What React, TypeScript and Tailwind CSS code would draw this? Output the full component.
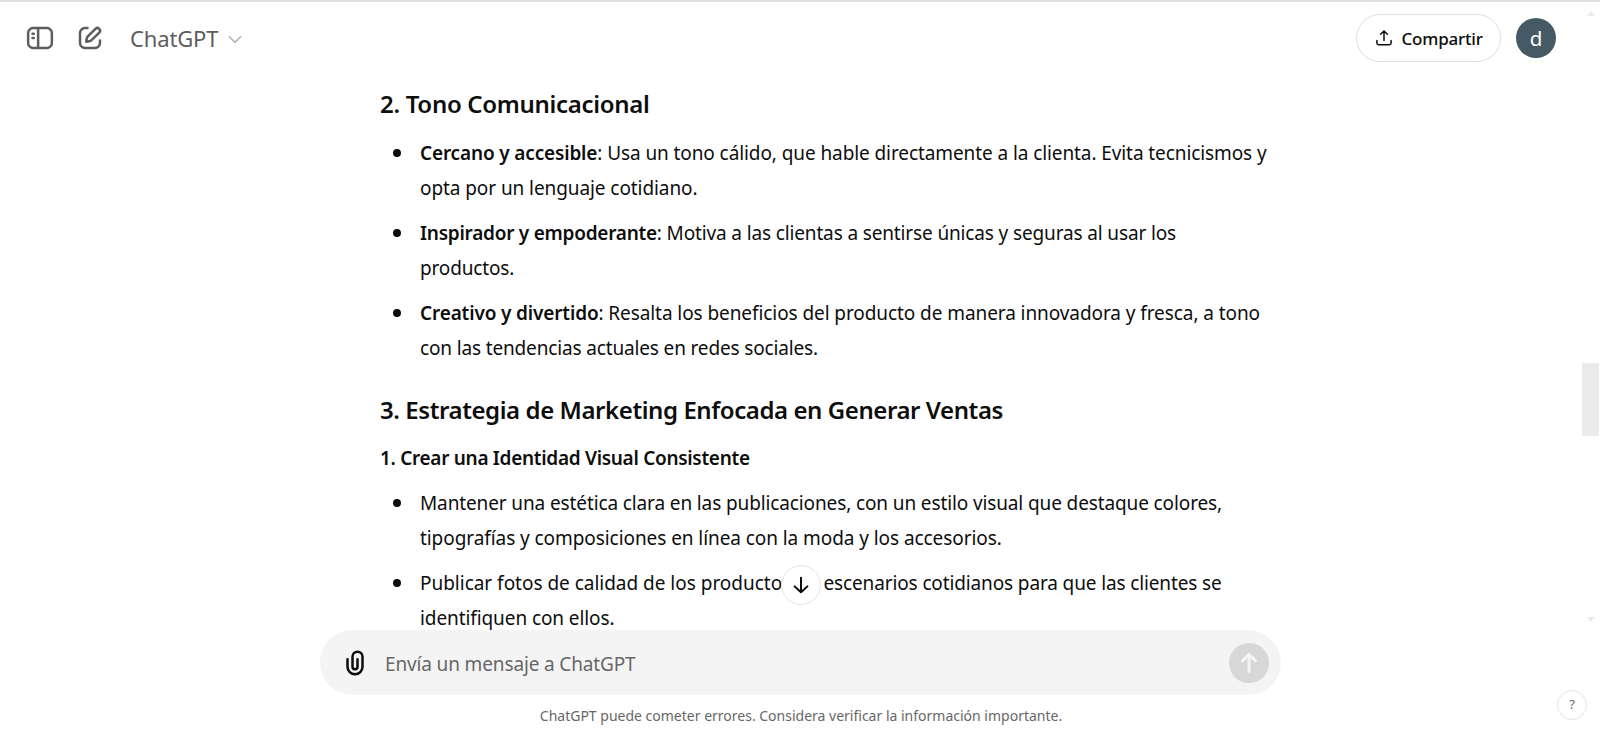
import React from "react";

type Segment = { text: string; style: string };

const toneItems: Segment[][][] = [
  [
    [
      { text: "Cercano y accesible", style: "font-semibold tracking-[-0.16px]" },
      {
        text: ": Usa un tono cálido, que hable directamente a la clienta. Evita tecnicismos y",
        style: "tracking-[-0.09px]",
      },
    ],
    [{ text: "opta por un lenguaje cotidiano.", style: "tracking-[-0.08px]" }],
  ],
  [
    [
      { text: "Inspirador y empoderante", style: "font-semibold tracking-[-0.25px]" },
      {
        text: ": Motiva a las clientas a sentirse únicas y seguras al usar los",
        style: "tracking-[-0.14px]",
      },
    ],
    [{ text: "productos.", style: "tracking-[-0.15px]" }],
  ],
  [
    [
      { text: "Creativo y divertido", style: "font-semibold tracking-[-0.15px]" },
      {
        text: ": Resalta los beneficios del producto de manera innovadora y fresca, a tono",
        style: "tracking-[-0.08px]",
      },
    ],
    [{ text: "con las tendencias actuales en redes sociales.", style: "tracking-[-0.15px]" }],
  ],
];

const identityItems: Segment[][][] = [
  [
    [
      {
        text: "Mantener una estética clara en las publicaciones, con un estilo visual que destaque colores,",
        style: "tracking-[-0.12px]",
      },
    ],
    [
      {
        text: "tipografías y composiciones en línea con la moda y los accesorios.",
        style: "tracking-[-0.07px]",
      },
    ],
  ],
  [
    [
      { text: "Publicar fotos de calidad de los productos en ", style: "tracking-[-0.02px]" },
      { text: "escenarios cotidianos para que las clientes se", style: "tracking-[-0.13px]" },
    ],
    [{ text: "identifiquen con ellos.", style: "tracking-[-0.09px]" }],
  ],
];

const BulletList = ({ items }: { items: Segment[][][] }) => (
  <ul className="flex flex-col gap-[10px]">
    {items.map((lines, i) => (
      <li key={i} className="flex">
        <span className="mt-[13px] ml-[12.5px] mr-[19.5px] h-2 w-2 shrink-0 rounded-full bg-[#0d0d0d]" />
        <div>
          {lines.map((segments, j) => (
            <p key={j} className="h-[35px] whitespace-nowrap text-[19px] leading-[35px]">
              {segments.map((s, k) => (
                <span key={k} className={s.style}>
                  {s.text}
                </span>
              ))}
            </p>
          ))}
        </div>
      </li>
    ))}
  </ul>
);

const Header = () => (
  <header className="flex h-[74px] items-center border-t-2 border-[#dfe1e0] pl-[25px] pr-[44px]">
    <svg className="h-[30px] w-[30px] text-[#5d5d5d]" viewBox="0 0 24 24" fill="currentColor">
      <path
        fillRule="evenodd"
        clipRule="evenodd"
        d="M8.857 3h6.286c1.084 0 1.958 0 2.666.058.729.06 1.369.185 1.961.487a5 5 0 0 1 2.185 2.185c.302.592.428 1.233.487 1.961.058.708.058 1.582.058 2.666v3.286c0 1.084 0 1.958-.058 2.666-.06.729-.185 1.369-.487 1.961a5 5 0 0 1-2.185 2.185c-.592.302-1.232.428-1.961.487C17.1 21 16.227 21 15.143 21H8.857c-1.084 0-1.958 0-2.666-.058-.728-.06-1.369-.185-1.96-.487a5 5 0 0 1-2.186-2.185c-.302-.592-.428-1.232-.487-1.961C1.5 15.6 1.5 14.727 1.5 13.643v-3.286c0-1.084 0-1.958.058-2.666.06-.728.185-1.369.487-1.96A5 5 0 0 1 4.23 3.544c.592-.302 1.233-.428 1.961-.487C6.9 3 7.773 3 8.857 3M6.354 5.051c-.605.05-.953.142-1.216.276a3 3 0 0 0-1.311 1.311c-.134.263-.226.611-.276 1.216-.05.617-.051 1.41-.051 2.546v3.2c0 1.137 0 1.929.051 2.546.05.605.142.953.276 1.216a3 3 0 0 0 1.311 1.311c.263.134.611.226 1.216.276.617.05 1.41.051 2.546.051h.6V5h-.6c-1.137 0-1.929 0-2.546.051M11.5 5v14h3.6c1.137 0 1.929 0 2.546-.051.605-.05.953-.142 1.216-.276a3 3 0 0 0 1.311-1.311c.134-.263.226-.611.276-1.216.05-.617.051-1.41.051-2.546v-3.2c0-1.137 0-1.929-.051-2.546-.05-.605-.142-.953-.276-1.216a3 3 0 0 0-1.311-1.311c-.263-.134-.611-.226-1.216-.276C17.029 5.001 16.236 5 15.1 5zM5 8.5a1 1 0 0 1 1-1h1a1 1 0 1 1 0 2H6a1 1 0 0 1-1-1M5 12a1 1 0 0 1 1-1h1a1 1 0 1 1 0 2H6a1 1 0 0 1-1-1"
      />
    </svg>
    <svg className="ml-5 h-[30px] w-[30px] text-[#5d5d5d]" viewBox="0 0 24 24" fill="currentColor">
      <path d="M15.673 3.913a3.121 3.121 0 1 1 4.414 4.414l-5.937 5.937a5 5 0 0 1-2.828 1.415l-2.18.31a1 1 0 0 1-1.132-1.13l.311-2.18A5 5 0 0 1 9.736 9.85zm3 1.414a1.12 1.12 0 0 0-1.586 0l-5.937 5.937a3 3 0 0 0-.849 1.697l-.123.86.86-.122a3 3 0 0 0 1.698-.849l5.937-5.937a1.12 1.12 0 0 0 0-1.586M11 4A1 1 0 0 1 10 5c-.998 0-1.702.008-2.253.06-.54.052-.862.141-1.109.267a3 3 0 0 0-1.311 1.311c-.134.263-.226.611-.276 1.216C5.001 8.471 5 9.264 5 10.4v3.2c0 1.137 0 1.929.051 2.546.05.605.142.953.276 1.216a3 3 0 0 0 1.311 1.311c.263.134.611.226 1.216.276.617.05 1.41.051 2.546.051h3.2c1.137 0 1.929 0 2.546-.051.605-.05.953-.142 1.216-.276a3 3 0 0 0 1.311-1.311c.126-.247.215-.569.266-1.108.053-.552.06-1.256.06-2.255a1 1 0 1 1 2 .002c0 .978-.006 1.78-.069 2.442-.064.673-.192 1.27-.475 1.827a5 5 0 0 1-2.185 2.185c-.592.302-1.232.428-1.961.487C15.6 21 14.727 21 13.643 21h-3.286c-1.084 0-1.958 0-2.666-.058-.728-.06-1.369-.185-1.96-.487a5 5 0 0 1-2.186-2.185c-.302-.592-.428-1.233-.487-1.961C3 15.6 3 14.727 3 13.643v-3.286c0-1.084 0-1.958.058-2.666.06-.729.185-1.369.487-1.961A5 5 0 0 1 5.73 3.545c.556-.284 1.154-.411 1.827-.475C8.22 3.007 9.021 3 10 3A1 1 0 0 1 11 4" />
    </svg>
    <span className="ml-[25px] text-[22px] tracking-[-0.15px] text-[#5d5d5d]">ChatGPT</span>
    <svg className="ml-[7px] mt-[2px] h-5 w-5 text-[#b4b4b4]" viewBox="0 0 24 24" fill="none">
      <path d="M5.293 9.3L12 16l6.707-6.7" stroke="currentColor" strokeWidth="2" strokeLinecap="round" strokeLinejoin="round" />
    </svg>
    <button className="ml-auto flex h-12 w-[145px] items-center rounded-full border border-[#dedede] pl-[17px] text-[17px] font-medium text-[#0d0d0d]">
      <svg className="h-5 w-5" viewBox="0 0 24 24" fill="none" stroke="currentColor" strokeWidth="1.8" strokeLinecap="round" strokeLinejoin="round">
        <path d="M12 15V4M8 7.500L12 3.500l4 4M3.500 15v3a2 2 0 0 0 2 2h13a2 2 0 0 0 2-2v-3" />
      </svg>
      <span className="ml-[7.5px] mt-[2px] tracking-[-0.2px]">Compartir</span>
    </button>
    <div className="ml-[15px] flex h-10 w-10 items-center justify-center rounded-full bg-[#455a64] text-[20.5px] text-white">
      <span>d</span>
    </div>
  </header>
);

const Composer = () => (
  <div className="relative flex h-[65px] w-[961px] items-center rounded-full bg-[#f4f4f4] pl-5 pr-[12px]">
    <svg className="h-[30px] w-[30px] text-[#0d0d0d]" viewBox="0 0 24 24" fill="currentColor">
      <path
        fillRule="evenodd"
        clipRule="evenodd"
        d="M9 7a5 5 0 0 1 10 0v8a7 7 0 1 1-14 0V9a1 1 0 0 1 2 0v6a5 5 0 0 0 10 0V7a3 3 0 1 0-6 0v8a1 1 0 1 0 2 0V9a1 1 0 1 1 2 0v6a3 3 0 1 1-6 0z"
      />
    </svg>
    <span className="ml-[15.5px] mt-[3px] text-[19px] tracking-[-0.14px] text-[#676767]">Envía un mensaje a ChatGPT</span>
    <button className="ml-auto flex h-10 w-10 items-center justify-center rounded-full bg-[#d7d7d7] text-[#f4f4f4]">
      <svg className="h-[26px] w-[26px]" viewBox="0 0 24 24" fill="none" stroke="currentColor" strokeWidth="2.8" strokeLinecap="round" strokeLinejoin="round">
        <path d="M12 19.500V4.500M6 10L12 4l6 6" />
      </svg>
    </button>
    <button className="absolute left-[461px] top-[-65px] flex h-10 w-10 items-center justify-center rounded-full border border-[#e3e3e3] bg-white text-[#0d0d0d]">
      <svg className="h-[22px] w-[22px]" viewBox="0 0 24 24" fill="none" stroke="currentColor" strokeWidth="2.2" strokeLinecap="round" strokeLinejoin="round">
        <path d="M12 4v16M5 13.500L12 20l7-6.500" />
      </svg>
    </button>
  </div>
);

const Scrollbar = () => (
  <div className="absolute right-0 top-[2px] flex h-[628px] w-[18px] flex-col">
    <span className="ml-[4.5px] mt-[9px] h-0 w-0 border-x-[4.5px] border-b-[5px] border-x-transparent border-b-[#ebebeb]" />
    <span className="mt-[347px] h-[73px] w-[17px] bg-[#ebebeb]" />
    <span className="ml-[4.5px] mt-[181px] h-0 w-0 border-x-[4.5px] border-t-[5px] border-x-transparent border-t-[#ebebeb]" />
  </div>
);

export default function App() {
  return (
    <div className="relative flex h-[732px] w-full flex-col overflow-hidden bg-white font-['Noto_Sans',sans-serif] text-[#0d0d0d]">
      <Header />
      <main className="h-[556px] overflow-hidden pl-[380px] pt-[10px]">
        <h3 className="h-[40px] whitespace-nowrap text-[24px] font-semibold leading-[40px] tracking-[-0.3px]">
          2. Tono Comunicacional
        </h3>
        <div className="pt-[12px]">
          <BulletList items={toneItems} />
        </div>
        <h3 className="mt-[24px] h-[40px] whitespace-nowrap text-[24px] font-semibold leading-[40px] tracking-[-0.42px]">
          3. Estrategia de Marketing Enfocada en Generar Ventas
        </h3>
        <h4 className="mt-[11px] h-[35px] whitespace-nowrap text-[19px] font-semibold leading-[35px] tracking-[-0.3px]">
          1. Crear una Identidad Visual Consistente
        </h4>
        <div className="pt-[10px]">
          <BulletList items={identityItems} />
        </div>
      </main>
      <div className="flex flex-col items-center">
        <Composer />
        <p className="mt-[11px] pl-[2px] text-[14px] leading-5 text-[#676767]">
          ChatGPT puede cometer errores. Considera verificar la información importante.
        </p>
      </div>
      <Scrollbar />
      <button className="absolute bottom-[12px] right-[13px] flex h-[30px] w-[30px] items-center justify-center rounded-full border border-[#e3e3e3] text-[13px] text-[#676767]">
        ?
      </button>
    </div>
  );
}
